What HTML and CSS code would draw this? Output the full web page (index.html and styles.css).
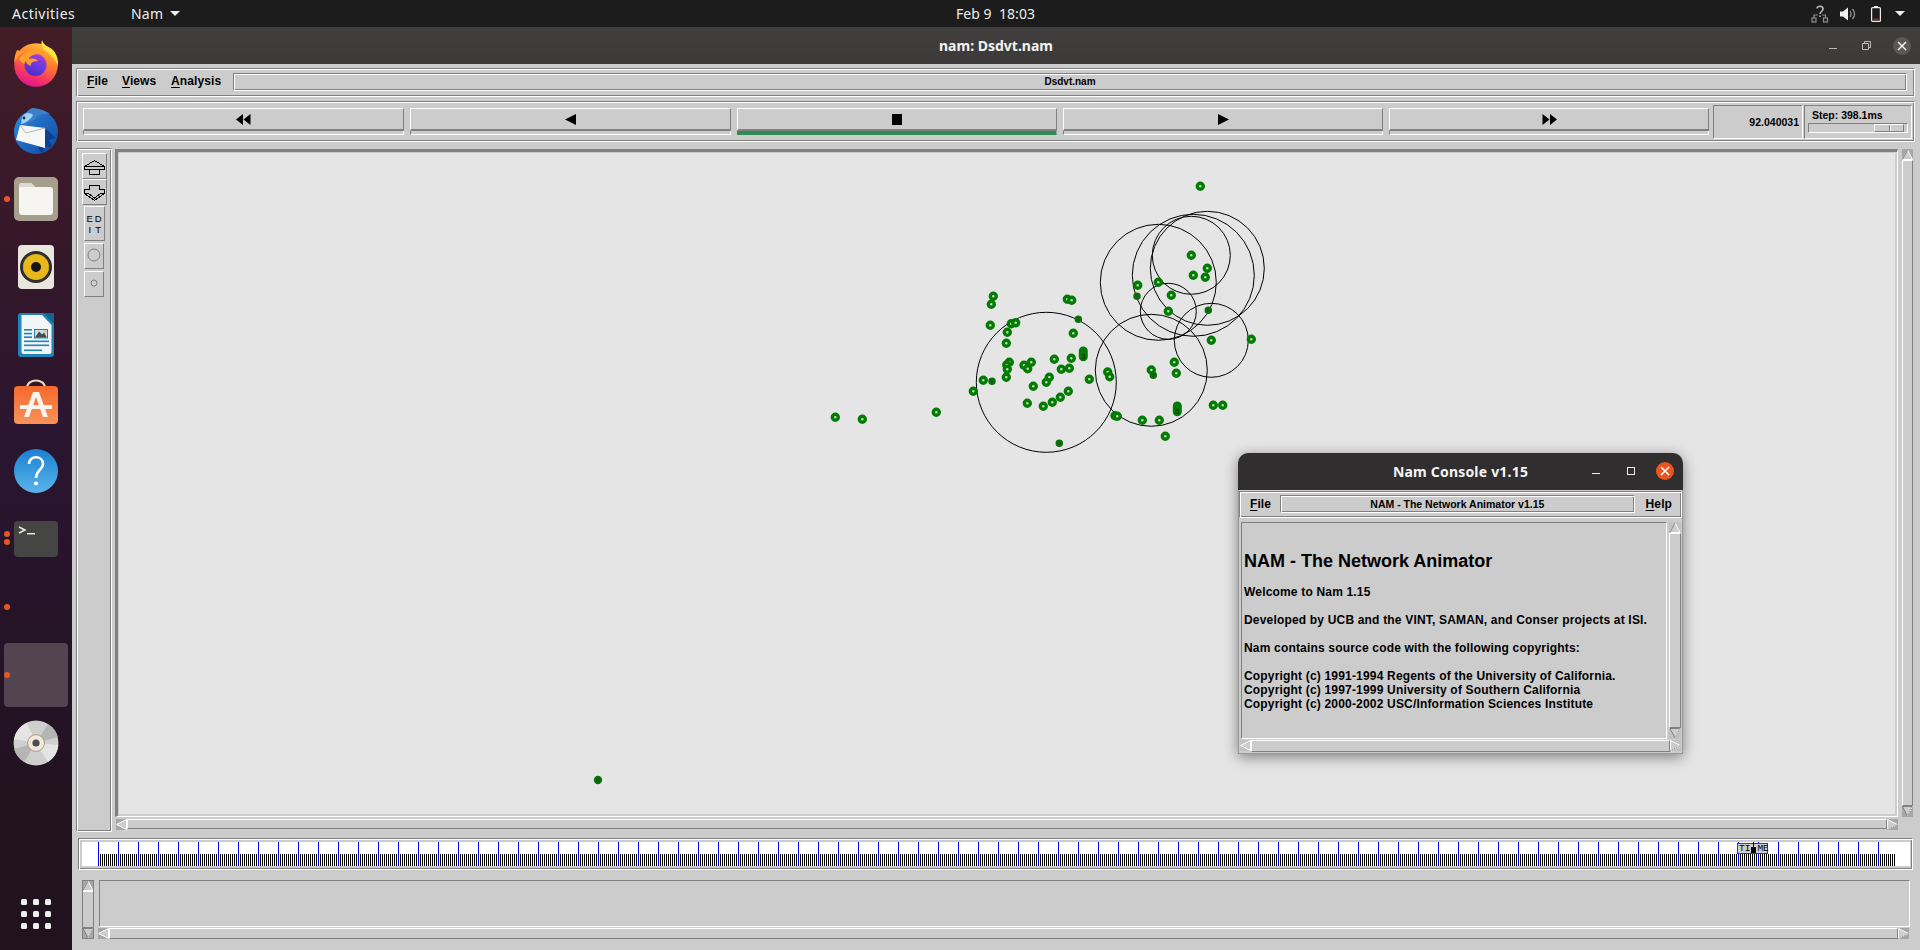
FILE: index.html
```html
<!DOCTYPE html>
<html lang="en">
<head>
<meta charset="utf-8">
<title>nam: Dsdvt.nam</title>
<link rel="stylesheet" href="styles.css">
</head>
<body>
<svg class="defs" width="0" height="0" aria-hidden="true">
  <defs>
    <symbol id="a-up" viewBox="0 0 11 11"><path d="M5.5 1 L10.5 10.5 H.5 Z" fill="#ccc" stroke="#fff" stroke-width="1"/><path d="M5.5 1 L.5 10.5" stroke="#808080" fill="none"/></symbol>
    <symbol id="a-down" viewBox="0 0 11 11"><path d="M.5 .5 H10.5 L5.5 10 Z" fill="#ccc" stroke="#808080"/><path d="M10.5 .5 L5.5 10" stroke="#fff" stroke-dasharray="1 1" fill="none"/></symbol>
    <symbol id="a-left" viewBox="0 0 11 11"><path d="M.7 5.5 L10.5 .5 V10.5 Z" fill="#ccc" stroke="#fff"/><path d="M.7 5.5 L10.5 .5" stroke="#eee" fill="none"/></symbol>
    <symbol id="a-right" viewBox="0 0 11 11"><path d="M10.3 5.5 L.5 .5 V10.5 Z" fill="#ccc" stroke="#fff"/><path d="M10.3 5.5 L.5 10.5" stroke="#808080" stroke-dasharray="1 1" fill="none"/></symbol>
    <linearGradient id="g-ff" x1="0.8" y1="0" x2="0.4" y2="1"><stop offset="0" stop-color="#ffc83a"/><stop offset=".45" stop-color="#ff7a2a"/><stop offset=".8" stop-color="#f5306a"/><stop offset="1" stop-color="#e0158f"/></linearGradient>
    <linearGradient id="g-ffp" x1="0.7" y1="0" x2="0.3" y2="1"><stop offset="0" stop-color="#a83be0"/><stop offset=".5" stop-color="#6a3be2"/><stop offset="1" stop-color="#4a2ac4"/></linearGradient>
    <linearGradient id="g-help" x1="0" y1="0" x2="0" y2="1"><stop offset="0" stop-color="#1c80d4"/><stop offset="1" stop-color="#5ab4ea"/></linearGradient>
    <linearGradient id="g-tb" x1="0" y1="0" x2="1" y2="1"><stop offset="0" stop-color="#2a8ae2"/><stop offset="1" stop-color="#12489c"/></linearGradient>
    <linearGradient id="g-sw" x1="0" y1="0" x2="0" y2="1"><stop offset="0" stop-color="#f46a2c"/><stop offset="1" stop-color="#f8925a"/></linearGradient>
  </defs>
</svg>

<header class="topbar">
  <div class="tb-left">
    <span class="activities">Activities</span>
    <span class="appmenu">Nam<i class="caret"></i></span>
  </div>
  <div class="clock">Feb 9&nbsp; 18:03</div>
  <div class="tray">
    <svg class="tray-net" width="18" height="18" viewBox="0 0 18 18"><g fill="none" stroke="#8e8e8e" stroke-width="1.2"><rect x="1" y="13" width="4" height="4"/><rect x="12.5" y="13" width="4" height="4"/><path d="M3 13 V10 H7 M14.5 13 V10 H11"/></g><path d="M6 3.5 C6 .5 12 .5 12 4 C12 6.5 9 6.5 9 9 M9 10.5 V12" fill="none" stroke="#bdbdbd" stroke-width="1.6"/></svg>
    <svg class="tray-vol" width="16" height="14" viewBox="0 0 16 14"><path d="M0 4.5 H3 L8 .5 V13.5 L3 9.5 H0 Z" fill="#eee"/><path d="M10 4 C11.5 6 11.5 8 10 10 M12.5 2 C15 5 15 9 12.5 12" fill="none" stroke="#9a9a9a" stroke-width="1.2"/></svg>
    <svg class="tray-bat" width="10" height="16" viewBox="0 0 10 16"><rect x=".6" y="1.6" width="8.8" height="13.8" rx="1" fill="none" stroke="#eee" stroke-width="1.2"/><rect x="3" y="0" width="4" height="1.5" fill="#eee"/><rect x="2" y="12.6" width="6" height="1.2" fill="#d02020"/></svg>
    <i class="caret caret-tray"></i>
  </div>
</header>

<div class="desktop">
  <nav class="dock">
    <div class="slot">
      <svg class="icon" viewBox="0 0 48 48">
        <circle cx="24" cy="26" r="21.8" fill="url(#g-ff)"/>
        <path d="M30 1 C28 7 31 10 36 14 C41 18 45 23 45.8 27 C47 19 43 10 36 8 C33 6.5 31 4 30 1Z" fill="#ffe044"/>
        <path d="M5 11 C3 15 2 20 2.5 24 C6 17 9 14 13 12 C10 12 7 12 5 11Z" fill="#ff9a2e"/>
        <path d="M7 20 C11 14 18 11 24 13 C19 14 16 16 16 18 C20 17 25 19 26 22 C20 22 18 25 19 27 C14 27 10 24 7 20Z" fill="#ffa52e"/>
        <circle cx="23.5" cy="26" r="11" fill="url(#g-ffp)"/>
        <path d="M11 16 C15 13 21 13 25 15 C20 16 17 18 17 20 C21 19 25 20 26 22 C20 22 18 25 19 27 C15 26 12 21 11 16Z" fill="#ff9d2a"/>
      </svg>
    </div>
    <div class="slot">
      <svg class="icon" viewBox="0 0 48 48">
        <circle cx="24" cy="25" r="22" fill="url(#g-tb)"/>
        <path d="M20 1 C25 1 33 3 38 7 C31 6 25 8 22 13 C17 16 12 18 9 17 C10 10 14 4 20 1Z" fill="#3d7fc8"/>
        <path d="M10 10 C13 5 18 5 21 8 C19 12 14 16 9 17 Z" fill="#9fd3f5"/>
        <circle cx="12" cy="11" r="1.4" fill="#0e2d55"/>
        <path d="M34 22 L44 31 L37 33 L41 41 L32 39 L31 47 L26 42 Z" fill="#0f3f8e"/>
        <path d="M8 18 L33 21 V41 L4 33 Z" fill="#f7f7f7"/>
        <path d="M8 18 L14 26 L33 21" fill="none" stroke="#b5b5b5" stroke-width="1"/>
      </svg>
    </div>
    <div class="slot">
      <i class="dot"></i>
      <svg class="icon" viewBox="0 0 48 48">
        <rect x="2" y="2" width="44" height="44" rx="5" fill="#a79f8d"/>
        <path d="M7 11 a3 3 0 0 1 3-3 h9 l4 4 h15 a3 3 0 0 1 3 3 v22 a3 3 0 0 1-3 3 H10 a3 3 0 0 1-3-3 Z" fill="#f6f5f2"/>
        <path d="M7 11 a3 3 0 0 1 3-3 h9 l4 4 H7 Z" fill="#dcd9cf"/>
      </svg>
    </div>
    <div class="slot">
      <svg class="icon" viewBox="0 0 48 48">
        <rect x="6" y="2" width="36" height="44" rx="4" fill="#e9e6dd"/>
        <circle cx="24" cy="24" r="16" fill="#2f2f2f"/>
        <circle cx="24" cy="24" r="13" fill="#e8b71c"/>
        <circle cx="24" cy="24" r="5" fill="#151515"/>
      </svg>
    </div>
    <div class="slot">
      <svg class="icon" viewBox="0 0 48 48">
        <path d="M9 2 H42 V43 a3 3 0 0 1-3 3 H9 a3 3 0 0 1-3-3 V5 a3 3 0 0 1 3-3Z" fill="#1f85b8"/>
        <path d="M9.5 4 H30 L39.5 14 V41 a2 2 0 0 1-2 2 H11.5 a2 2 0 0 1-2-2 Z" fill="#f3f6f8"/>
        <path d="M31 2 H42 V13 Z" fill="#15648f"/>
        <g fill="#1f85b8"><rect x="12" y="18" width="8" height="1.6"/><rect x="12" y="21.8" width="8" height="1.6"/><rect x="12" y="25.4" width="8" height="1.6"/><rect x="12" y="29.5" width="25" height="1.6"/><rect x="12" y="33.5" width="25" height="1.6"/><rect x="12" y="38.5" width="18" height="1.6"/></g>
        <rect x="22" y="18" width="14" height="9.5" fill="#1f85b8"/>
        <rect x="23" y="19" width="12" height="7.5" fill="#c8ddea"/>
        <path d="M23 26.5 L27 20.5 L30 23.5 L32 21.5 L35 26.5 Z" fill="#4d4a45"/>
        <circle cx="33.5" cy="20.3" r="1.2" fill="#f2c531"/>
      </svg>
    </div>
    <div class="slot">
      <svg class="icon" viewBox="0 0 48 48">
        <path d="M15 9 C15 -1 33 -1 33 9" fill="none" stroke="#f0d9b8" stroke-width="2"/>
        <rect x="2" y="7" width="44" height="38" rx="4" fill="url(#g-sw)"/>
        <path d="M12 38 L21 13 H27 L36 38 H31 L24 18 L17 38 Z M8 26 H40 V30 H8 Z" fill="#fbf4ee"/>
      </svg>
    </div>
    <div class="slot">
      <svg class="icon" viewBox="0 0 48 48">
        <circle cx="24" cy="24" r="22" fill="url(#g-help)"/>
        <path d="M17 17 C17 8 31 8 31 17 C31 23 24 23 24 31" fill="none" stroke="#fff" stroke-width="2.6"/>
        <circle cx="24" cy="36.5" r="2.1" fill="#fff"/>
      </svg>
    </div>
    <div class="slot">
      <i class="dot dot-a"></i><i class="dot dot-b"></i>
      <svg class="icon" viewBox="0 0 48 48">
        <rect x="2" y="6" width="44" height="36" rx="4" fill="#454544"/>
        <path d="M7 12 L13 15 L7 18" fill="none" stroke="#f0f0f0" stroke-width="1.4"/>
        <rect x="15" y="18" width="8" height="1.4" fill="#f0f0f0"/>
      </svg>
    </div>
    <div class="slot"><i class="dot"></i></div>
    <div class="slot slot-active"><i class="dot"></i></div>
    <div class="slot">
      <svg class="icon" viewBox="0 0 48 48">
        <circle cx="24" cy="24" r="22.4" fill="#cfcfcf"/>
        <path d="M24 24 L46 18 A22.4 22.4 0 0 0 36 5 Z M24 24 L2 30 A22.4 22.4 0 0 0 12 43 Z" fill="#b5b5b5"/>
        <path d="M24 24 L46.4 26 A22.4 22.4 0 0 1 36 43 Z M24 24 L2 20 A22.4 22.4 0 0 1 15 4 Z" fill="#e4e4e4"/>
        <circle cx="24" cy="24" r="8.4" fill="#efe9dc" stroke="#a69b88"/>
        <circle cx="24" cy="24" r="3.6" fill="#4c4c4c"/>
      </svg>
    </div>
    <div class="apps"><i></i><i></i><i></i><i></i><i></i><i></i><i></i><i></i><i></i></div>
  </nav>

  <main class="nam">
    <div class="titlebar">
      <span class="tt">nam: Dsdvt.nam</span>
      <div class="wctl">
        <i class="w-min"></i>
        <svg width="9" height="9" viewBox="0 0 9 9" class="w-rest"><path d="M.5 2.5 H6.5 V8.5 H.5 Z M2.5 2.5 V.5 H8.5 V6.5 H6.5" fill="none" stroke="#b8b8b8"/></svg>
        <span class="w-close"><svg width="10" height="10" viewBox="0 0 10 10"><path d="M1 1 L9 9 M9 1 L1 9" stroke="#fff" stroke-width="1.4"/></svg></span>
      </div>
    </div>

    <div class="groove menuframe">
      <span class="mi"><u>F</u>ile</span>
      <span class="mi"><u>V</u>iews</span>
      <span class="mi"><u>A</u>nalysis</span>
      <div class="groove namefield">Dsdvt.nam</div>
    </div>

    <div class="groove controls">
      <div class="pbtns">
        <div class="pbtn pbtn-wide"><div class="face"><svg width="15" height="11" viewBox="0 0 15 11"><path d="M7 0 L0 5.5 L7 11Z M14.5 0 L7.5 5.5 L14.5 11Z"/></svg></div><div class="strip"></div></div>
        <div class="pbtn pbtn-wide"><div class="face"><svg width="11" height="11" viewBox="0 0 11 11"><path d="M11 0 L0 5.5 L11 11Z"/></svg></div><div class="strip"></div></div>
        <div class="pbtn"><div class="face"><svg width="10" height="11" viewBox="0 0 10 11"><rect width="10" height="11"/></svg></div><div class="strip strip-on"></div></div>
        <div class="pbtn"><div class="face"><svg width="11" height="11" viewBox="0 0 11 11"><path d="M0 0 L11 5.5 L0 11Z"/></svg></div><div class="strip"></div></div>
        <div class="pbtn"><div class="face"><svg width="15" height="11" viewBox="0 0 15 11"><path d="M.5 0 L7.5 5.5 L.5 11Z M8 0 L15 5.5 L8 11Z"/></svg></div><div class="strip"></div></div>
      </div>
      <div class="sunk timebox">92.040031</div>
      <div class="sunk stepbox">
        <div class="steplabel">Step: 398.1ms</div>
        <div class="trough"><div class="thumb"></div></div>
      </div>
    </div>

    <div class="workspace">
      <div class="groove toolbar">
        <div class="tool tool-wide"><svg width="23" height="23" viewBox="0 0 23 23"><path d="M11.5 5.5 L1.5 11.5 V14.5 H6.5 V19.5 H16.5 V14.5 H21.5 V11.5 Z M1.5 11.5 H21.5 M6.5 14.5 H16.5" fill="none" stroke="#000" shape-rendering="crispEdges"/></svg></div>
        <div class="tool tool-wide"><svg width="23" height="24" viewBox="0 0 23 24"><path d="M6.5 5.5 H16.5 V9.5 H21.5 V13.5 L11.5 20.5 L1.5 13.5 V9.5 H6.5 Z M1.5 13.5 H5.5 L11.5 18 L17.5 13.5 H21.5" fill="none" stroke="#000" shape-rendering="crispEdges"/></svg></div>
        <div class="tool tool-edit"><span>E</span><span>D</span><span>I</span><span>T</span></div>
        <div class="tool tool-sm"><svg width="14" height="14" viewBox="0 0 14 14"><circle cx="7" cy="7" r="6" fill="none" stroke="#808080"/></svg></div>
        <div class="tool tool-sm"><svg width="8" height="8" viewBox="0 0 8 8"><circle cx="4" cy="4" r="3" fill="none" stroke="#808080"/></svg></div>
      </div>
      <div class="canvas-col">
        <div class="canvas-frame">
          <svg class="canvas" width="1776" height="661" viewBox="119 153 1776 661">
            <g class="rings">
              <circle cx="1046.3" cy="382.3" r="70"/><circle cx="1151.3" cy="370.3" r="56"/><circle cx="1211.3" cy="340.3" r="37"/><circle cx="1168.3" cy="311.3" r="28"/><circle cx="1158.3" cy="282.3" r="58"/><circle cx="1193.3" cy="275.3" r="61"/><circle cx="1207.3" cy="268.3" r="57"/><circle cx="1191.3" cy="255.3" r="39"/>
            </g>
            <g class="nodes">
              <circle cx="1200.3" cy="186.3" r="3"/><circle cx="1191.3" cy="255.3" r="3"/><circle cx="1207.3" cy="268.3" r="3"/><circle cx="1193.3" cy="275.3" r="3"/><circle cx="1205.3" cy="277.3" r="3"/><circle cx="1137.7" cy="285.3" r="3"/><circle cx="1158.3" cy="282.3" r="3"/><circle cx="1171.3" cy="295.3" r="3"/><circle cx="1168.3" cy="311.3" r="3"/><circle cx="1211.3" cy="340.3" r="3"/><circle cx="1251.3" cy="339.3" r="3"/><circle cx="1174.3" cy="362.3" r="3"/><circle cx="1176.3" cy="373.3" r="3"/><circle cx="1151.3" cy="370" r="3"/><circle cx="1107.7" cy="372" r="3"/><circle cx="1109.7" cy="376.7" r="3"/><circle cx="1213.3" cy="405.3" r="3"/><circle cx="1222.7" cy="405.3" r="3"/><circle cx="1142.3" cy="420.3" r="3"/><circle cx="1159.3" cy="420.3" r="3"/><circle cx="1165.3" cy="436.3" r="3"/><circle cx="1115" cy="415.7" r="3"/><circle cx="1117.3" cy="416.3" r="3"/>
              <circle cx="993.3" cy="296.3" r="3"/><circle cx="991.3" cy="304.3" r="3"/><circle cx="1067.3" cy="299.3" r="3"/><circle cx="1071.7" cy="300.3" r="3"/><circle cx="990.3" cy="325.3" r="3"/><circle cx="1011.3" cy="323.7" r="3"/><circle cx="1015.7" cy="322.7" r="3"/><circle cx="1007.3" cy="332.3" r="3"/><circle cx="1073.3" cy="333.3" r="3"/><circle cx="1006.3" cy="343.3" r="3"/><circle cx="1054.3" cy="359.3" r="3"/><circle cx="1071.3" cy="358.3" r="3"/><circle cx="1009.3" cy="362.3" r="3"/><circle cx="1006.7" cy="365" r="3"/><circle cx="1007.3" cy="369.3" r="3"/><circle cx="1024" cy="365.3" r="3"/><circle cx="1027.7" cy="368.7" r="3"/><circle cx="1031.3" cy="362.3" r="3"/><circle cx="1061.3" cy="369.3" r="3"/><circle cx="1069.3" cy="368.3" r="3"/><circle cx="1006.3" cy="377.3" r="3"/><circle cx="1049.3" cy="377.3" r="3"/><circle cx="1046.3" cy="382.3" r="3"/><circle cx="1089.3" cy="379.3" r="3"/><circle cx="983.3" cy="380.3" r="3"/><circle cx="1033.3" cy="386.3" r="3"/><circle cx="973.3" cy="391.3" r="3"/><circle cx="1068.3" cy="391.3" r="3"/><circle cx="1060.3" cy="397.3" r="3"/><circle cx="1052.3" cy="402.3" r="3"/><circle cx="1043.3" cy="406.3" r="3"/><circle cx="1027.3" cy="403.3" r="3"/><circle cx="835.3" cy="417.3" r="3"/><circle cx="862.3" cy="419.3" r="3"/><circle cx="936.3" cy="412.3" r="3"/>
            </g>
            <g class="smalls">
              <circle cx="1137" cy="296.3" r="3"/><circle cx="1208.3" cy="310.3" r="3"/><circle cx="1153.3" cy="375.3" r="3"/><circle cx="1059.3" cy="443.3" r="3"/><circle cx="1078.3" cy="319.3" r="3"/><circle cx="992" cy="381.3" r="3"/><circle cx="598" cy="780" r="3.4"/>
            </g>
            <g class="pills">
              <path d="M1083.3 351 V356.7"/><path d="M1177.3 406 V411.7"/>
            </g>
            <g class="plabels">
              <text x="1083.3" y="359">3</text><text x="1177.3" y="414">5</text>
            </g>
          </svg>
        </div>
        <div class="hscroll hscroll-main"><svg class="arw"><use href="#a-left"/></svg><div class="hthumb"></div><svg class="arw"><use href="#a-right"/></svg></div>
      </div>
      <div class="vscroll vscroll-main"><svg class="arw"><use href="#a-up"/></svg><div class="vthumb"></div><svg class="arw"><use href="#a-down"/></svg></div>
    </div>

    <div class="groove timeline">
      <div class="band">
        <div class="track"></div>
        <div class="timemark"><span>TI</span><svg width="7" height="11" viewBox="0 0 7 11"><path d="M3 0 H4 V5 H6 V11 H1 V5 H3 Z"/></svg><span>ME</span></div>
      </div>
    </div>

    <div class="lower">
      <div class="vscroll vscroll-low"><svg class="arw"><use href="#a-up"/></svg><div class="vthumb"></div><svg class="arw"><use href="#a-down"/></svg></div>
      <div class="lower-col">
        <div class="sunk lower-text"></div>
        <div class="hscroll hscroll-low"><svg class="arw"><use href="#a-left"/></svg><div class="hthumb"></div><svg class="arw"><use href="#a-right"/></svg></div>
      </div>
    </div>
  </main>
</div>

<section class="console">
  <div class="con-title">
    <span class="con-name">Nam Console v1.15</span>
    <div class="con-ctl">
      <i class="con-min"></i>
      <i class="con-max"></i>
      <span class="con-close"><svg width="10" height="10" viewBox="0 0 10 10"><path d="M1 1 L9 9 M9 1 L1 9" stroke="#fff" stroke-width="1.6"/></svg></span>
    </div>
  </div>
  <div class="con-body">
    <div class="groove con-menu">
      <span class="mi"><u>F</u>ile</span>
      <div class="groove con-field">NAM - The Network Animator v1.15</div>
      <span class="mi"><u>H</u>elp</span>
    </div>
    <div class="con-main">
      <div class="sunk con-text">
        <h1>NAM - The Network Animator</h1>
        <p>Welcome to Nam 1.15</p>
        <p>Developed by UCB and the VINT, SAMAN, and Conser projects at ISI.</p>
        <p>Nam contains source code with the following copyrights:</p>
        <p>Copyright (c) 1991-1994 Regents of the University of California.<br>Copyright (c) 1997-1999 University of Southern California<br>Copyright (c) 2000-2002 USC/Information Sciences Institute</p>
      </div>
      <div class="vscroll vscroll-con"><svg class="arw"><use href="#a-up"/></svg><div class="vthumb"></div><svg class="arw"><use href="#a-down"/></svg></div>
    </div>
    <div class="hscroll hscroll-con"><svg class="arw"><use href="#a-left"/></svg><div class="hthumb"></div><svg class="arw"><use href="#a-right"/></svg></div>
  </div>
</section>
</body>
</html>
```
FILE: styles.css
```css
* { box-sizing: border-box; }
html, body { margin: 0; height: 950px; overflow: hidden; }
body {
  width: 1920px;
  display: flex;
  flex-direction: column;
  position: relative;
  font-family: "Liberation Sans", Arial, sans-serif;
  background: #21121f;
}
i { display: block; font-style: normal; }
.defs { position: absolute; }

/* ---------- GNOME top bar ---------- */
.topbar {
  height: 27px;
  flex: none;
  background: #1c1c1c;
  color: #eeeeec;
  font: 14px "Noto Sans", sans-serif;
  display: grid;
  grid-template-columns: 1fr auto 1fr;
  align-items: center;
}
.tb-left { display: flex; align-items: center; padding-left: 12px; }
.activities { width: 119px; letter-spacing: .5px; }
.appmenu { display: flex; align-items: center; gap: 7px; letter-spacing: .2px; }
.caret {
  width: 0; height: 0;
  border-left: 5px solid transparent;
  border-right: 5px solid transparent;
  border-top: 5px solid #eeeeec;
}
.clock { margin-left: 71px; letter-spacing: .05px; }
.tray { display: flex; justify-content: flex-end; align-items: center; padding-right: 15px; }
.tray-net { margin-right: 11px; }
.tray-vol { margin-right: 15px; }
.tray-bat { margin-right: 14px; }

/* ---------- desktop ---------- */
.desktop { flex: 1; display: flex; min-height: 0; }
.dock {
  width: 72px;
  flex: none;
  padding: 4px 4px 21px;
  display: flex;
  flex-direction: column;
  gap: 4px;
  background: linear-gradient(180deg, #431c27 0, #33172b 260px, #2a1530 420px, #21121f 800px);
}
.slot {
  height: 64px;
  flex: none;
  position: relative;
  display: flex;
  align-items: center;
  justify-content: center;
  border-radius: 4px;
}
.slot-active { background: #544350; }
.icon { width: 48px; height: 48px; display: block; }
.dot {
  position: absolute;
  left: 0; top: 29px;
  width: 6px; height: 6px;
  border-radius: 50%;
  background: #e95420;
}
.dot-a { top: 24px; }
.dot-b { top: 32px; }
.apps {
  margin-top: auto;
  align-self: center;
  display: grid;
  grid-template-columns: repeat(3, 6px);
  gap: 6px;
}
.apps i { width: 6px; height: 6px; border-radius: 1.5px; background: #f0eeee; }

/* ---------- nam window ---------- */
.nam {
  flex: 1;
  min-width: 0;
  background: #cccccc;
  display: flex;
  flex-direction: column;
  color: #000;
}
.titlebar {
  height: 37px;
  flex: none;
  background: linear-gradient(#403f3e, #3b3a39);
  color: #f2f2f2;
  font: bold 14px "Noto Sans", sans-serif;
  display: flex;
  align-items: center;
  justify-content: center;
  position: relative;
}
.wctl {
  position: absolute;
  right: 9px; top: 0; bottom: 0;
  display: flex;
  align-items: center;
}
.w-min { width: 8px; height: 1px; background: #b8b8b8; margin-right: 25px; margin-top: 5px; }
.w-rest { margin-right: 22px; }
.w-close {
  width: 18px; height: 18px;
  border-radius: 50%;
  background: #5a5957;
  display: flex;
  align-items: center;
  justify-content: center;
}

.groove {
  border: 1px solid;
  border-color: #808080 #fff #fff #808080;
  box-shadow: inset 1px 1px 0 #fff, inset -1px -1px 0 #808080;
}
.sunk {
  border: 1px solid;
  border-color: #808080 #fff #fff #808080;
}
.mi { font-weight: bold; font-size: 12px; line-height: 14px; letter-spacing: .1px; margin-bottom: 3px; }
.mi u { text-underline-offset: 2px; }

.menuframe {
  margin: 4px 5px 0 4px;
  height: 29px;
  flex: none;
  display: flex;
  align-items: center;
  padding: 0 7px 0 10px;
}
.menuframe .mi:nth-child(1) { width: 35px; }
.menuframe .mi:nth-child(2) { width: 49px; }
.menuframe .mi:nth-child(3) { width: 62px; }
.namefield {
  flex: 1;
  height: 18px;
  margin-bottom: 1px;
  text-align: center;
  font: bold 10px/15px "Liberation Sans", sans-serif;
}

.controls {
  margin: 4px 5px 0 4px;
  height: 41px;
  flex: none;
  display: flex;
  padding: 3px 2px 0 6px;
}
.pbtns { width: 1626px; display: flex; gap: 6px; padding-top: 3px; }
.pbtn { flex: 1; height: 27px; }
.pbtn-wide { flex: 0 0 321px; }
.face {
  height: 23px;
  border: 1px solid;
  border-color: #fff #808080 #808080 #fff;
  border-bottom-width: 2px;
  display: flex;
  align-items: center;
  justify-content: center;
}
.strip {
  height: 4px;
  border-left: 1px solid #808080;
  border-right: 1px solid #fff;
  border-bottom: 1px solid #fff;
}
.strip-on { background: #2e8b57; border-color: #2e8b57; border-right-color: #7fb89a; }
.timebox {
  width: 90px;
  height: 34px;
  margin-left: 4px;
  font: bold 10.5px/32px "Liberation Sans", sans-serif;
  text-align: right;
  padding-right: 3px;
}
.stepbox { width: 108px; height: 34px; margin-left: 1px; padding: 3px 3px 0 3px; }
.steplabel { font: bold 10.5px/13px "Liberation Sans", sans-serif; padding-left: 4px; }
.trough {
  height: 10px;
  margin-top: 1px;
  border: 1px solid;
  border-color: #808080 #fff #fff #808080;
  display: flex;
  justify-content: flex-end;
  padding-right: 3px;
}
.thumb {
  width: 30px;
  border: 1px solid;
  border-color: #fff #808080 #808080 #fff;
  background: linear-gradient(90deg, transparent 14px, #808080 14px, #808080 15px, #fff 15px, #fff 16px, transparent 16px);
}

.workspace {
  margin: 6px 5px 0 4px;
  height: 684px;
  flex: none;
  display: flex;
}
.toolbar {
  width: 36px;
  flex: none;
  padding-top: 4px;
  display: flex;
  flex-direction: column;
  align-items: center;
}
.tool {
  border: 1px solid;
  border-color: #fff #808080 #808080 #fff;
  display: flex;
  align-items: center;
  justify-content: center;
}
.tool-wide { width: 25px; height: 26px; margin-left: 1px; }
.tool-edit {
  width: 21px; height: 35px;
  margin-top: 1px;
  display: grid;
  grid-template-columns: 1fr 1fr;
  align-content: center;
  justify-items: center;
  padding: 0 1px;
  font: 9.5px/11px "Liberation Sans", sans-serif;
}
.tool-sm { width: 20px; height: 26px; margin-top: 2px; margin-right: 1px; padding-bottom: 2px; }

.canvas-col { flex: 1; min-width: 0; margin-left: 3px; padding-top: 1px; display: flex; flex-direction: column; }
.canvas-frame {
  height: 668px;
  border-style: solid;
  border-width: 3px 1px 1px 3px;
  border-color: #808080 #fff #fff #808080;
  padding: 1px 2px 2px 1px;
}
.canvas { display: block; background: #e5e5e5; }
.rings circle { fill: none; stroke: #000; stroke-width: 1; }
.nodes circle { fill: #c6d2c8; stroke: #007c00; stroke-width: 3.4; }
.smalls circle { fill: #1c5a1c; stroke: #007c00; stroke-width: 1.5; }
.pills path { fill: none; stroke: #007c00; stroke-width: 9; stroke-linecap: round; }
.plabels text { font: 8px "Liberation Sans", sans-serif; fill: #002800; text-anchor: middle; }

.arw { width: 11px; height: 11px; flex: none; display: block; background: #a6a6a6; }
.hscroll { display: flex; align-items: stretch; }
.hthumb {
  flex: 1;
  border: 1px solid;
  border-color: #fff #808080 #808080 #fff;
}
.vscroll { display: flex; flex-direction: column; align-items: stretch; }
.vthumb {
  flex: 1;
  border: 1px solid;
  border-color: #fff #808080 #808080 #fff;
}
.hscroll-main { height: 10px; margin-top: 2px; margin-left: 1px; }
.vscroll-main { width: 11px; height: 668px; margin: 1px 2px 0 4px; flex: none; }

/* ---------- timeline ---------- */
.timeline {
  margin: 6px 7px 0 6px;
  height: 32px;
  flex: none;
  padding: 3px 2px 3px 3px;
}
.band { height: 24px; background: #fff; padding-left: 16px; position: relative; }
.track {
  width: 1797px;
  height: 24px;
  background:
    linear-gradient(90deg, #0000ff 0 1px, #fff 1px 2px, transparent 2px 19px, #fff 19px 20px) 0 0 / 20px 100% repeat-x,
    repeating-linear-gradient(90deg, #000 0 1px, #fff 1px 2px) 0 100% / 100% 12px no-repeat;
}
.timemark {
  position: absolute;
  left: 1655px; top: 1px;
  width: 31px; height: 11px;
  background: #ccc;
  border: 1px solid #444;
  display: flex;
  justify-content: space-between;
  align-items: flex-end;
  font: 9.5px/9px "Liberation Mono", monospace;
  padding: 0 1px;
}
.timemark svg { flex: none; margin-top: -1px; }

/* ---------- lower panel ---------- */
.lower { margin: 10px 10px 0; height: 59px; flex: none; display: flex; gap: 4px; }
.vscroll-low { width: 12px; flex: none; outline: 1px solid #808080; outline-offset: -1px; }
.vscroll-low .arw { width: 12px; }
.lower-col { flex: 1; display: flex; flex-direction: column; min-width: 0; }
.lower-text { height: 47px; margin-left: 1px; flex: none; }
.hscroll-low { height: 11px; margin-top: 1px; margin-right: 1px; }

/* ---------- floating console ---------- */
.console {
  position: absolute;
  left: 1238px; top: 453px;
  width: 445px; height: 301px;
  display: flex;
  flex-direction: column;
  border-radius: 10px 10px 0 0;
  box-shadow: 0 3px 14px rgba(0, 0, 0, .45);
  color: #000;
}
.con-title {
  height: 37px;
  flex: none;
  background: #302e2e;
  border-radius: 10px 10px 0 0;
  display: flex;
  align-items: center;
  justify-content: center;
  position: relative;
  color: #f5f5f5;
  font: bold 14px "Noto Sans", sans-serif;
}
.con-name { letter-spacing: .2px; }
.con-ctl {
  position: absolute;
  right: 9px; top: 9px;
  display: flex;
  align-items: center;
}
.con-min { width: 8px; height: 1px; background: #eee; margin-right: 27px; margin-top: 5px; }
.con-max { width: 8px; height: 8px; border: 1px solid #eee; margin-right: 21px; }
.con-close {
  width: 18px; height: 18px;
  border-radius: 50%;
  background: #e95420;
  display: flex;
  align-items: center;
  justify-content: center;
}
.con-body {
  flex: 1;
  min-height: 0;
  background: #ccc;
  padding: 1px 1px 2px;
  display: flex;
  flex-direction: column;
  box-shadow: inset 1px 0 0 #999, inset -1px 0 0 #999, inset 0 -1px 0 #999;
}
.con-menu {
  height: 27px;
  flex: none;
  display: flex;
  align-items: center;
  padding: 0 9px 0 10px;
}
.con-menu .mi { flex: none; margin-bottom: 2px; }
.con-field {
  flex: 1;
  height: 18px;
  margin: 0 11px 2px 9px;
  text-align: center;
  font: bold 10.5px/16px "Liberation Sans", sans-serif;
}
.con-main { flex: 1; min-height: 0; margin-top: 4px; display: flex; padding: 0 1px 0 2px; }
.con-text { flex: 1; min-width: 0; height: 217px; padding: 0 0 0 2px; }
.con-text h1 { margin: 28px 0 0; font: bold 18px/20px "Liberation Sans", sans-serif; }
.con-text p { margin: 14px 0 0; font: bold 12px/14px "Liberation Sans", sans-serif; letter-spacing: .18px; white-space: nowrap; }
.vscroll-con { width: 12px; margin-left: 2px; height: 217px; flex: none; }
.vscroll-con .arw { width: 12px; background: #c2c2c2; }
.hscroll-con { height: 12px; margin: 1px 1px 0; flex: none; }
.hscroll-con .arw { background: #c2c2c2; }
```
